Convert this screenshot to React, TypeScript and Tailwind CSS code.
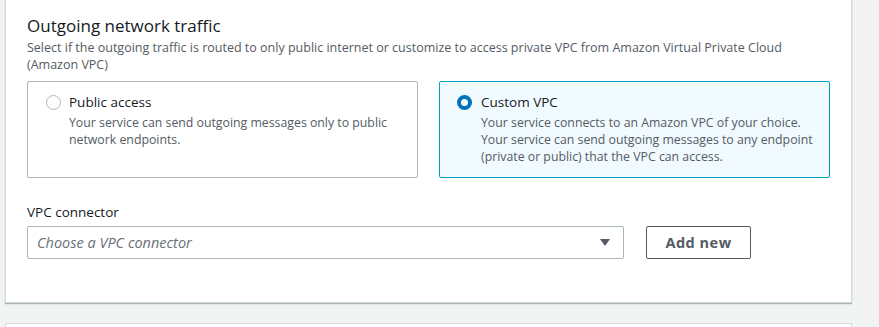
import React from 'react'

export default function App() {
  return (
    <div className="h-[327px] w-[879px] overflow-hidden bg-[#f2f3f3] font-['Open_Sans',sans-serif] text-[#16191f]">
      {/* Network card */}
      <div className="ml-[5px] h-[303px] w-[847px] border border-t-0 border-[#d5dbdb] bg-white px-[21px] pt-[14px] shadow-[0_1px_1px_rgba(0,28,36,0.3)]">
        <h2 className="text-[17px] leading-[24px]">Outgoing network traffic</h2>
        <p className="mt-[1px] w-[762px] text-[12.5px] leading-[17px] text-[#545b64]">
          Select if the outgoing traffic is routed to only public internet or customize to access private VPC from Amazon Virtual Private Cloud (Amazon VPC)
        </p>

        <div className="mt-[8px] grid grid-cols-[391px_391px] gap-[21px]">
          <label className="flex h-[97px] gap-[8px] rounded-[2px] border border-[#aab7b8] px-[18px] pt-[10px]">
            <span className="mt-[3px] h-[15px] w-[15px] shrink-0 rounded-full border border-[#aab7b8] bg-white" />
            <span>
              <span className="block text-[13.5px] leading-[20px]">Public access</span>
              <span className="mt-[2px] block text-[12.3px] leading-[17px] text-[#545b64]">
                Your service can send outgoing messages only to public network endpoints.
              </span>
            </span>
          </label>
          <label className="flex h-[97px] gap-[9px] rounded-[2px] border border-[#00a1c9] bg-[#f1faff] pl-[17px] pr-[8px] pt-[10px]">
            <span className="mt-[3px] h-[15px] w-[15px] shrink-0 rounded-full border-[4px] border-[#0073bb] bg-white" />
            <span>
              <span className="block text-[13.5px] leading-[20px]">Custom VPC</span>
              <span className="mt-[2px] block text-[12.3px] leading-[17px] text-[#545b64]">
                Your service connects to an Amazon VPC of your choice. Your service can send outgoing messages to any endpoint (private or public) that the VPC can access.
              </span>
            </span>
          </label>
        </div>

        <div className="mt-[24px] text-[13.5px] leading-[20px]">VPC connector</div>
        <div className="mt-[4px] flex items-center gap-[22px]">
          <div className="flex h-[33px] w-[597px] items-center justify-between rounded-[2px] border border-[#aab7b8] pl-[9px] pr-[12px]">
            <span className="text-[14.5px] italic text-[#687078]">Choose a VPC connector</span>
            <svg width="12" height="9" viewBox="0 0 12 9">
              <path d="M1 1h10L6 8z" fill="#545b64" />
            </svg>
          </div>
          <button className="h-[33px] w-[105px] rounded-[2px] border border-[#545b64] bg-white text-[14.5px] font-bold tracking-[0.5px] text-[#545b64]">
            Add new
          </button>
        </div>
      </div>

      {/* Next card edge */}
      <div className="ml-[5px] mt-[20px] h-[20px] w-[847px] border border-[#d5dbdb] bg-white" />
    </div>
  )
}
